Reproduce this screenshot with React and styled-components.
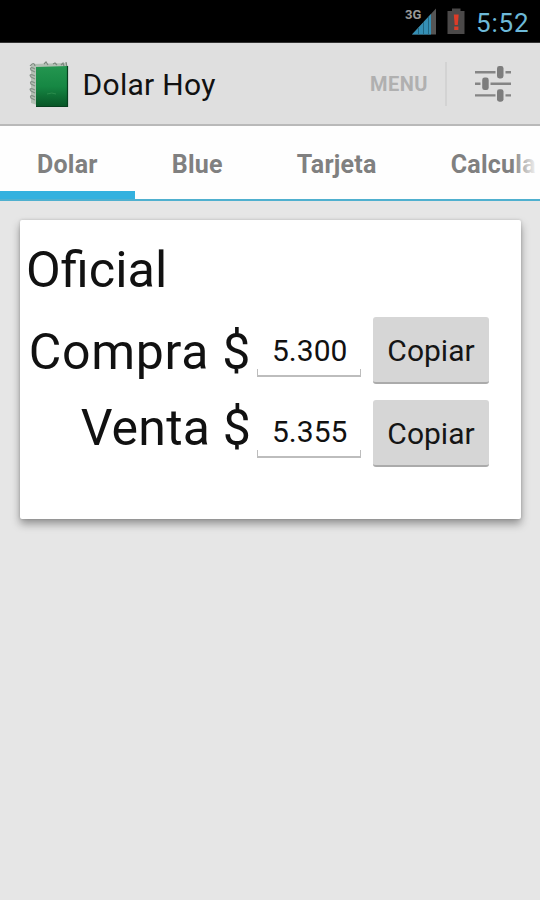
import styled, { createGlobalStyle } from 'styled-components'

const GlobalStyle = createGlobalStyle`
  * {
    box-sizing: border-box;
  }
  body {
    margin: 0;
    background-color: #e6e6e6;
    font-family: Roboto, sans-serif;
    color: #111;
  }
`

const Screen = styled.div`
  width: 540px;
  height: 900px;
  overflow: hidden;
  background-color: #e6e6e6;
`
const StatusBar = styled.div`
  height: 43px;
  display: flex;
  justify-content: flex-end;
  background-color: #000;
  border-bottom: 1px solid #333;
`
const StatusIcons = styled.svg`
  width: 72px;
  height: 42px;
`
const Clock = styled.span`
  width: 65px;
  padding-left: 1px;
  font-size: 26px;
  line-height: 46px;
  letter-spacing: 0.8px;
  color: #6db9d8;
`
const ActionBar = styled.header`
  height: 83px;
  display: flex;
  align-items: center;
  padding: 0 28px 0 27px;
  background-color: #dfdfdf;
  border-bottom: 2px solid #b9b9b9;
`
const AppTitle = styled.h1`
  margin: 2px auto 0 12.5px;
  font-size: 30px;
  font-weight: 400;
  line-height: 40px;
  letter-spacing: 0.3px;
`
const MenuButton = styled.button`
  border: none;
  padding: 1px 0 0;
  margin-right: 17px;
  background: transparent;
  font-family: inherit;
  font-size: 20px;
  font-weight: 700;
  line-height: 26px;
  letter-spacing: 0.5px;
  color: #b0b0b0;
`
const Divider = styled.div`
  width: 2px;
  height: 44px;
  margin-right: 28px;
  background-color: #d3d3d3;
`
const TabStrip = styled.nav`
  height: 75px;
  display: flex;
  position: relative;
  overflow: hidden;
  background-color: #fefefe;
  border-bottom: 2px solid #4fb0cf;
  &::after {
    content: '';
    position: absolute;
    right: 0;
    top: 0;
    bottom: -2px;
    width: 28px;
    background: linear-gradient(to right, rgba(254, 254, 254, 0), #fefefe 95%);
  }
`
const Tab = styled.div`
  flex: none;
  height: 75px;
  padding: 0 37px;
  font-size: 25px;
  font-weight: 700;
  line-height: 77px;
  letter-spacing: 0.25px;
  color: #808080;
  box-shadow: ${({ $active }) => ($active ? 'inset 0 -10px #33b1df' : 'none')};
`
const Card = styled.section`
  width: 501px;
  height: 299px;
  margin: 19px 0 0 20px;
  padding: 19px 0 0 6px;
  background-color: #fff;
  border-radius: 2px;
  box-shadow: 0 5px 9px rgba(0, 0, 0, 0.36), 0 0 3px rgba(0, 0, 0, 0.16);
`
const CardTitle = styled.h2`
  margin: 0;
  font-size: 50.5px;
  font-weight: 400;
  line-height: 62px;
`
const QuoteRow = styled.div`
  height: 67px;
  margin-top: ${({ $gap }) => $gap}px;
  display: flex;
`
const QuoteLabel = styled.label`
  width: 225px;
  text-align: right;
  white-space: nowrap;
  font-size: 50px;
  line-height: ${({ $line }) => $line}px;
  letter-spacing: ${({ $spacing }) => $spacing}px;
`
const Amount = styled.div`
  width: 104px;
  height: ${({ $height }) => $height}px;
  margin: 0 12px 0 6px;
  display: flex;
  align-items: flex-end;
  border: 1px solid #bdbdbd;
  border-width: 0 0 2px;
  background: linear-gradient(#bdbdbd, #bdbdbd) left bottom / 1px 6px no-repeat,
    linear-gradient(#bdbdbd, #bdbdbd) right bottom / 1px 6px no-repeat;
  padding: 0 0 6px 15px;
  font-size: 30px;
  line-height: 36px;
`
const CopyButton = styled.button`
  width: 116px;
  height: 67px;
  border: none;
  border-bottom: 2px solid #ababab;
  border-radius: 3px;
  padding: 2px 0 0;
  background-color: #d6d6d6;
  font-family: inherit;
  font-size: 30px;
  color: #151515;
`

const tabs = ['Dolar', 'Blue', 'Tarjeta', 'Calcula']

const quotes = [
  { label: 'Compra $', value: '5.300', gap: 16, line: 71, spacing: 0.7, height: 60 },
  { label: 'Venta $', value: '5.355', gap: 16, line: 56, spacing: 0.2, height: 58 }
]

function SignalAndBattery() {
  return (
    <StatusIcons viewBox="403 0 72 42">
      <text x="405" y="19" fontSize="13" fontWeight="700" fill="#999" fontFamily="Roboto">
        3G
      </text>
      <path d="M412 34.5L436 8.5V34.5Z" fill="#555" />
      <path d="M412 34.5L431 14V34.5Z" fill="#348fb5" />
      <path d="M418.5 28V34.5M423.5 22V34.5M428.5 17V34.5" stroke="#216681" strokeWidth="1" />
      <path d="M447.5 11H452V8.5H460.5V11H464.5V34H447.5Z" fill="#4b4949" />
      <path d="M453.8 14.5H458.7L457.8 25H454.7Z" fill="#dc3c28" />
      <rect x="454.2" y="26.5" width="4.2" height="3.5" fill="#dc3c28" />
    </StatusIcons>
  )
}

function NotebookIcon() {
  return (
    <svg width="43" height="50" viewBox="27 59 43 50">
      <defs>
        <linearGradient id="cover" x1="0" y1="0" x2="0" y2="1">
          <stop offset="0" stopColor="#249650" />
          <stop offset="0.5" stopColor="#168743" />
          <stop offset="1" stopColor="#075426" />
        </linearGradient>
      </defs>
      <path d="M31 64L67 63V70H37V105L31 103Z" fill="#b4c0b5" />
      <path
        d="M30 66q4-5 5 0M44 64l2-2 2 3M53 64l2-1 2 2M61 65l2-2 1 3M66 62l1 5"
        fill="none"
        stroke="#7c877e"
        strokeWidth="1.2"
      />
      <path
        d="M35 69q-6-3-4 1l4 2M35 76q-7-3-4 1l4 2M35 83q-6-3-4 1l4 2M35 90q-7-3-4 1l4 2M35 97q-6-3-4 1l4 2"
        fill="none"
        stroke="#849087"
        strokeWidth="1.2"
      />
      <path d="M36 67L68 66V107H36Z" fill="url(#cover)" />
      <path d="M67.5 66V106.5H36" fill="none" stroke="#07401f" strokeWidth="1.2" />
      <path d="M47 94q5-2 9 0" fill="none" stroke="#2b8c4c" strokeWidth="1" />
    </svg>
  )
}

function SlidersIcon() {
  return (
    <svg width="37" height="38" viewBox="475 65 37 38">
      <path
        d="M475 72.2H495.5M505.5 72.2H511M475 83.8H480.5M490.5 83.8H511M475 95.4H495.5M505.5 95.4H511"
        stroke="#858585"
        strokeWidth="2.4"
      />
      <g fill="#7d7d7d">
        <rect x="497" y="66" width="6.5" height="12.5" rx="2.4" />
        <rect x="482.2" y="77.6" width="6.5" height="12.5" rx="2.4" />
        <rect x="497" y="89.2" width="6.5" height="12.5" rx="2.4" />
      </g>
    </svg>
  )
}

function App() {
  return (
    <Screen>
      <GlobalStyle />
      <StatusBar>
        <SignalAndBattery />
        <Clock>5:52</Clock>
      </StatusBar>
      <ActionBar>
        <NotebookIcon />
        <AppTitle>Dolar Hoy</AppTitle>
        <MenuButton>MENU</MenuButton>
        <Divider />
        <SlidersIcon />
      </ActionBar>
      <TabStrip>
        {tabs.map((tab, index) => (
          <Tab key={tab} $active={index === 0}>
            {tab}
          </Tab>
        ))}
      </TabStrip>
      <Card>
        <CardTitle>Oficial</CardTitle>
        {quotes.map(({ label, value, gap, line, spacing, height }) => (
          <QuoteRow key={label} $gap={gap}>
            <QuoteLabel $line={line} $spacing={spacing}>
              {label}
            </QuoteLabel>
            <Amount $height={height}>{value}</Amount>
            <CopyButton>Copiar</CopyButton>
          </QuoteRow>
        ))}
      </Card>
    </Screen>
  )
}

export default App
